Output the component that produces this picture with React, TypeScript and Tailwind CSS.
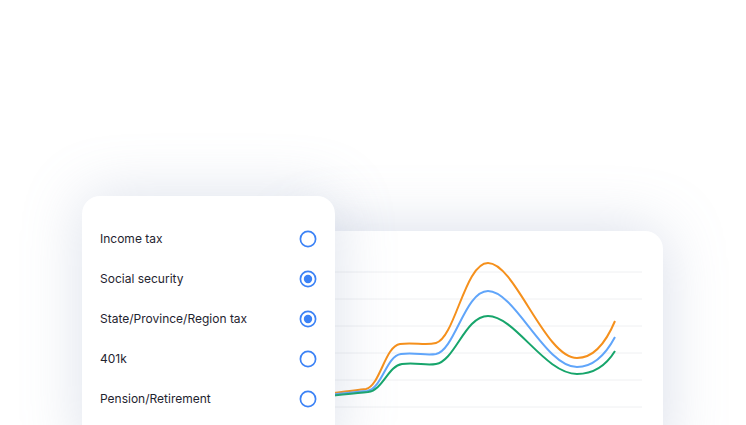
import React from 'react';

const options = [
  { label: 'Income tax', checked: false },
  { label: 'Social security', checked: true },
  { label: 'State/Province/Region tax', checked: true },
  { label: '401k', checked: false },
  { label: 'Pension/Retirement', checked: false },
];

function Radio({ checked }: { checked: boolean }) {
  return (
    <svg width="18" height="18" viewBox="0 0 18 18">
      <circle cx="9" cy="9" r="7.6" fill="none" stroke="#3b82f6" strokeWidth="1.7" />
      {checked && <circle cx="9" cy="9" r="4.2" fill="#3b82f6" />}
    </svg>
  );
}

export default function App() {
  return (
    <div
      className="h-[425px] w-[746px] overflow-hidden bg-white"
      style={{ fontFamily: 'Inter, "Noto Sans", sans-serif' }}
    >
      <div className="flex items-start pl-[82px] pt-[196px]">
        {/* options card */}
        <div className="relative z-10 h-[260px] w-[253px] shrink-0 rounded-[18px] bg-white pl-[18px] pr-[18px] pt-[23px] shadow-[0_0_60px_rgba(140,155,190,0.3)]">
          {options.map((o) => (
            <div key={o.label} className="flex h-10 items-center justify-between">
              <span className="text-[12px] text-[#1f2430]">{o.label}</span>
              <Radio checked={o.checked} />
            </div>
          ))}
        </div>

        {/* chart card */}
        <div className="-ml-[35px] mt-[35px] h-[230px] w-[363px] shrink-0 rounded-[18px] bg-white shadow-[0_0_60px_rgba(140,155,190,0.34)]">
          <svg width="363" height="194" viewBox="300 231 363 194">
            {[272, 299, 326, 353, 380, 407].map((y) => (
              <line key={y} x1="300" x2="642" y1={y} y2={y} stroke="#eff0f2" strokeWidth="1" />
            ))}
            <path
              d="M320 395 C335 393 355 390 366 389 C380 386 385 346 400 344 C415 342 425 346 436 343 C455 338 465 263 488 263 C515 263 545 358 577 358 C595 358 607 340 615 321"
              fill="none"
              stroke="#f5901c"
              strokeWidth="2"
            />
            <path
              d="M320 396 C340 394 355 392 367 391 C382 389 386 356 401 354 C416 352 425 356 436 354 C455 350 465 291 488 291 C515 291 545 367 577 367 C595 367 607 352 615 337"
              fill="none"
              stroke="#60a5fa"
              strokeWidth="2"
            />
            <path
              d="M320 397 C340 395 355 393 368 392 C383 390 388 366 402 364 C417 362 425 366 436 364 C455 361 465 316 488 316 C515 316 545 374 577 374 C595 374 607 364 615 351"
              fill="none"
              stroke="#17a56b"
              strokeWidth="2"
            />
          </svg>
        </div>
      </div>
    </div>
  );
}
